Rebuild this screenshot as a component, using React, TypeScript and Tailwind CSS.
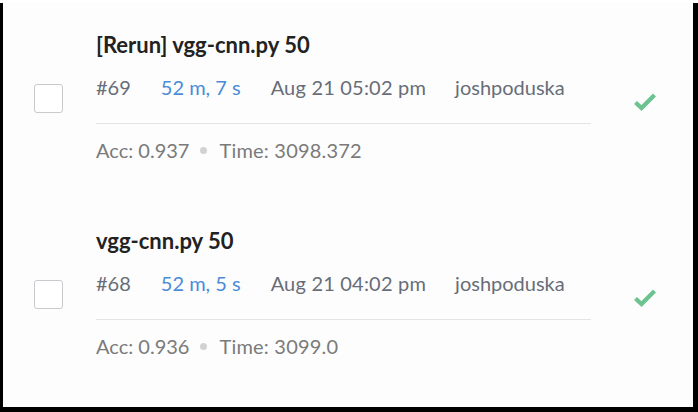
import React from 'react';

type Run = {
  title: string;
  id: string;
  duration: string;
  date: string;
  user: string;
  acc: string;
  time: string;
};

const runs: Run[] = [
  { title: '[Rerun] vgg-cnn.py 50', id: '#69', duration: '52 m, 7 s', date: 'Aug 21 05:02 pm', user: 'joshpoduska', acc: '0.937', time: '3098.372' },
  { title: 'vgg-cnn.py 50', id: '#68', duration: '52 m, 5 s', date: 'Aug 21 04:02 pm', user: 'joshpoduska', acc: '0.936', time: '3099.0' },
];

function CheckIcon() {
  return (
    <svg width="24" height="20" viewBox="0 0 24 20" className="block">
      <path d="M2.5 10.5 L8.5 16 L21.5 3" fill="none" stroke="#6cc38f" strokeWidth="4.2" strokeLinecap="butt" strokeLinejoin="miter" />
    </svg>
  );
}

function RunRow({ run }: { run: Run }) {
  return (
    <div className="flex h-[196px] pt-[28px]">
      <div className="ml-[31px] mt-[53px] w-[29px] h-[29px] shrink-0 rounded-[3px] border border-[#c9c9ce] bg-white" />
      <div className="ml-[33px] w-[495px] shrink-0">
        <div className="text-[22px] leading-[28px] font-bold text-[#222]">{run.title}</div>
        <div className="mt-[16px] flex text-[20px] leading-[24px] text-[#676d78]">
          <span>{run.id}</span>
          <span className="ml-[30px] text-[#4b8bd8]">{run.duration}</span>
          <span className="ml-[30px] tracking-[0.2px]">{run.date}</span>
          <span className="ml-[29px]">{run.user}</span>
        </div>
        <div className="mt-[24px] h-px bg-[#e4e4e6]" />
        <div className="mt-[14px] flex items-center text-[20px] leading-[24px] text-[#7a7a7a]">
          <span>Acc: {run.acc}</span>
          <span className="ml-[11px] mr-[12px] w-[7px] h-[7px] rounded-full bg-[#d2d2d2]" />
          <span className="tracking-[0.2px]">Time: {run.time}</span>
        </div>
      </div>
      <div className="ml-[42px] mt-[61px]">
        <CheckIcon />
      </div>
    </div>
  );
}

export default function App() {
  return (
    <div className="w-[698px] h-[412px] bg-black" style={{ fontFamily: 'Lato, "Open Sans", sans-serif' }}>
      <div className="ml-[3px] mt-[3px] w-[690px] h-[404px] bg-[#fdfdfd] overflow-hidden">
        {runs.map((r) => (
          <RunRow key={r.id} run={r} />
        ))}
      </div>
    </div>
  );
}
